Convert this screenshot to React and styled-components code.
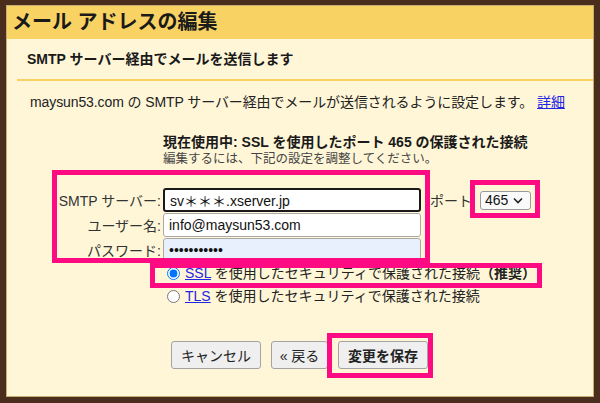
import styled, { createGlobalStyle } from "styled-components";

const GlobalStyle = createGlobalStyle`
  html, body {
    margin: 0;
    padding: 0;
    background: #4a2d1c;
  }
  body {
    font-family: "Liberation Sans", "Noto Sans CJK JP", sans-serif;
    color: #222;
  }
`;

const App = () => {
  return (
    <Frame>
      <GlobalStyle />
      <Panel>
        <Header>メール アドレスの編集</Header>
        <SubHeader>SMTP サーバー経由でメールを送信します</SubHeader>
        <Body>
          <Intro>
            maysun53.com の SMTP サーバー経由でメールが送信されるように設定します。 <Link>詳細</Link>
          </Intro>
          <Current>現在使用中: SSL を使用したポート 465 の保護された接続</Current>
          <Hint>編集するには、下記の設定を調整してください。</Hint>

          <Form>
            <Label>SMTP サーバー:</Label>
            <Field $focused defaultValue="sv＊＊＊.xserver.jp" />
            <PortCell>
              ポート
              <Select>
                465
                <svg width="10" height="7" viewBox="0 0 10 7">
                  <polyline points="1,1.5 5,5.5 9,1.5" fill="none" stroke="#222" strokeWidth="1.6" />
                </svg>
              </Select>
            </PortCell>
            <Label>ユーザー名:</Label>
            <Field defaultValue="info@maysun53.com" />
            <span />
            <Label>パスワード:</Label>
            <Field $autofill type="password" defaultValue="12345678901" />
            <span />
          </Form>

          <Options>
            <Option>
              <Radio type="radio" name="sec" defaultChecked />
              <Link>SSL</Link> を使用したセキュリティで保護された接続<b>（推奨）</b>
            </Option>
            <Option>
              <Radio type="radio" name="sec" />
              <Link>TLS</Link> を使用したセキュリティで保護された接続
            </Option>
          </Options>

          <Buttons>
            <Button $w={90}>キャンセル</Button>
            <Button $w={57}>« 戻る</Button>
            <Button $w={90} $primary>変更を保存</Button>
          </Buttons>
        </Body>
      </Panel>

      <Mark $x={52} $y={170} $w={378} $h={93} />
      <Mark $x={470} $y={180} $w={70} $h={38} />
      <Mark $x={150} $y={263} $w={392} $h={25} />
      <Mark $x={327} $y={333} $w={106} $h={45} />
    </Frame>
  );
};

export default App;

const Frame = styled.div`
  position: relative;
  width: 600px;
  height: 403px;
  box-sizing: border-box;
  padding: 5px 6px 6px 6px;
  background: #4a2d1c;
`;

const Panel = styled.div`
  height: 100%;
  box-sizing: border-box;
  border: 1px solid #c7ad74;
  background: #fff6d8;
  overflow: hidden;
`;

const Header = styled.div`
  height: 33px;
  line-height: 33px;
  background: #f9d264;
  padding-left: 5px;
  font-size: 20px;
  font-weight: bold;
  color: #1a1a1a;
`;

const SubHeader = styled.div`
  height: 40px;
  line-height: 40px;
  margin-left: 10px;
  padding-left: 10px;
  border-bottom: 2px solid #f9d264;
  font-size: 14px;
  font-weight: bold;
  color: #1a1a1a;
`;

const Body = styled.div`
  padding: 12px 0 0 23px;
`;

const Intro = styled.div`
  font-size: 14px;
  line-height: 18px;
  white-space: nowrap;
  letter-spacing: -0.1px;
`;

const Link = styled.span`
  color: #2424e6;
  text-decoration: underline;
`;

const Current = styled.div`
  margin: 22px 0 0 133px;
  font-size: 14px;
  font-weight: bold;
  line-height: 18px;
  color: #1a1a1a;
`;

const Hint = styled.div`
  margin-left: 133px;
  font-size: 12.5px;
  line-height: 16px;
  color: #444;
  white-space: nowrap;
`;

const Form = styled.div`
  display: grid;
  grid-template-columns: 130px 258px auto;
  column-gap: 2px;
  row-gap: 1px;
  margin: 21px 0 0 1px;
  align-items: center;
`;

const Label = styled.div`
  text-align: right;
  font-size: 14px;
  color: #333;
  white-space: nowrap;
`;

const Field = styled.input`
  box-sizing: border-box;
  width: 258px;
  height: 24px;
  margin: 0;
  padding: 0 5px;
  font-family: "Liberation Sans", "Noto Sans CJK JP", sans-serif;
  font-size: 14px;
  color: #111;
  background: ${(p) => (p.$autofill ? "#e8f0fe" : "#fff")};
  border: ${(p) => (p.$focused ? "2px solid #1a1a1a" : "1px solid #a9a9a9")};
  border-radius: 3px;
  outline: none;
`;

const PortCell = styled.div`
  display: flex;
  align-items: center;
  gap: 8px;
  margin-left: 7px;
  font-size: 14px;
  color: #333;
`;

const Select = styled.div`
  box-sizing: border-box;
  width: 51px;
  height: 19px;
  display: flex;
  align-items: center;
  gap: 5px;
  padding-left: 4px;
  font-size: 14px;
  color: #111;
  background: #fafafa;
  border: 1px solid #999;
  border-radius: 3px;
`;

const Options = styled.div`
  margin: 0 0 0 137px;
`;

const Option = styled.div`
  height: 23px;
  line-height: 23px;
  font-size: 14px;
  white-space: nowrap;
  color: #222;

  b {
    font-weight: bold;
  }
`;

const Radio = styled.input`
  width: 13px;
  height: 13px;
  margin: 0 5px 0 0;
  vertical-align: -2px;
`;

const Buttons = styled.div`
  display: flex;
  gap: 10px;
  margin: 33px 0 0 141px;
`;

const Button = styled.button`
  box-sizing: border-box;
  width: ${(p) => p.$w}px;
  height: 28px;
  padding: 0;
  font-family: "Liberation Sans", "Noto Sans CJK JP", sans-serif;
  font-size: 14px;
  font-weight: ${(p) => (p.$primary ? "bold" : "normal")};
  color: #222;
  background: #efefef;
  border: 1px solid #a3a3a3;
  border-radius: 3px;
`;

const Mark = styled.div`
  position: absolute;
  left: ${(p) => p.$x}px;
  top: ${(p) => p.$y}px;
  width: ${(p) => p.$w}px;
  height: ${(p) => p.$h}px;
  box-sizing: border-box;
  border: 5px solid #fe0a82;
  pointer-events: none;
`;
